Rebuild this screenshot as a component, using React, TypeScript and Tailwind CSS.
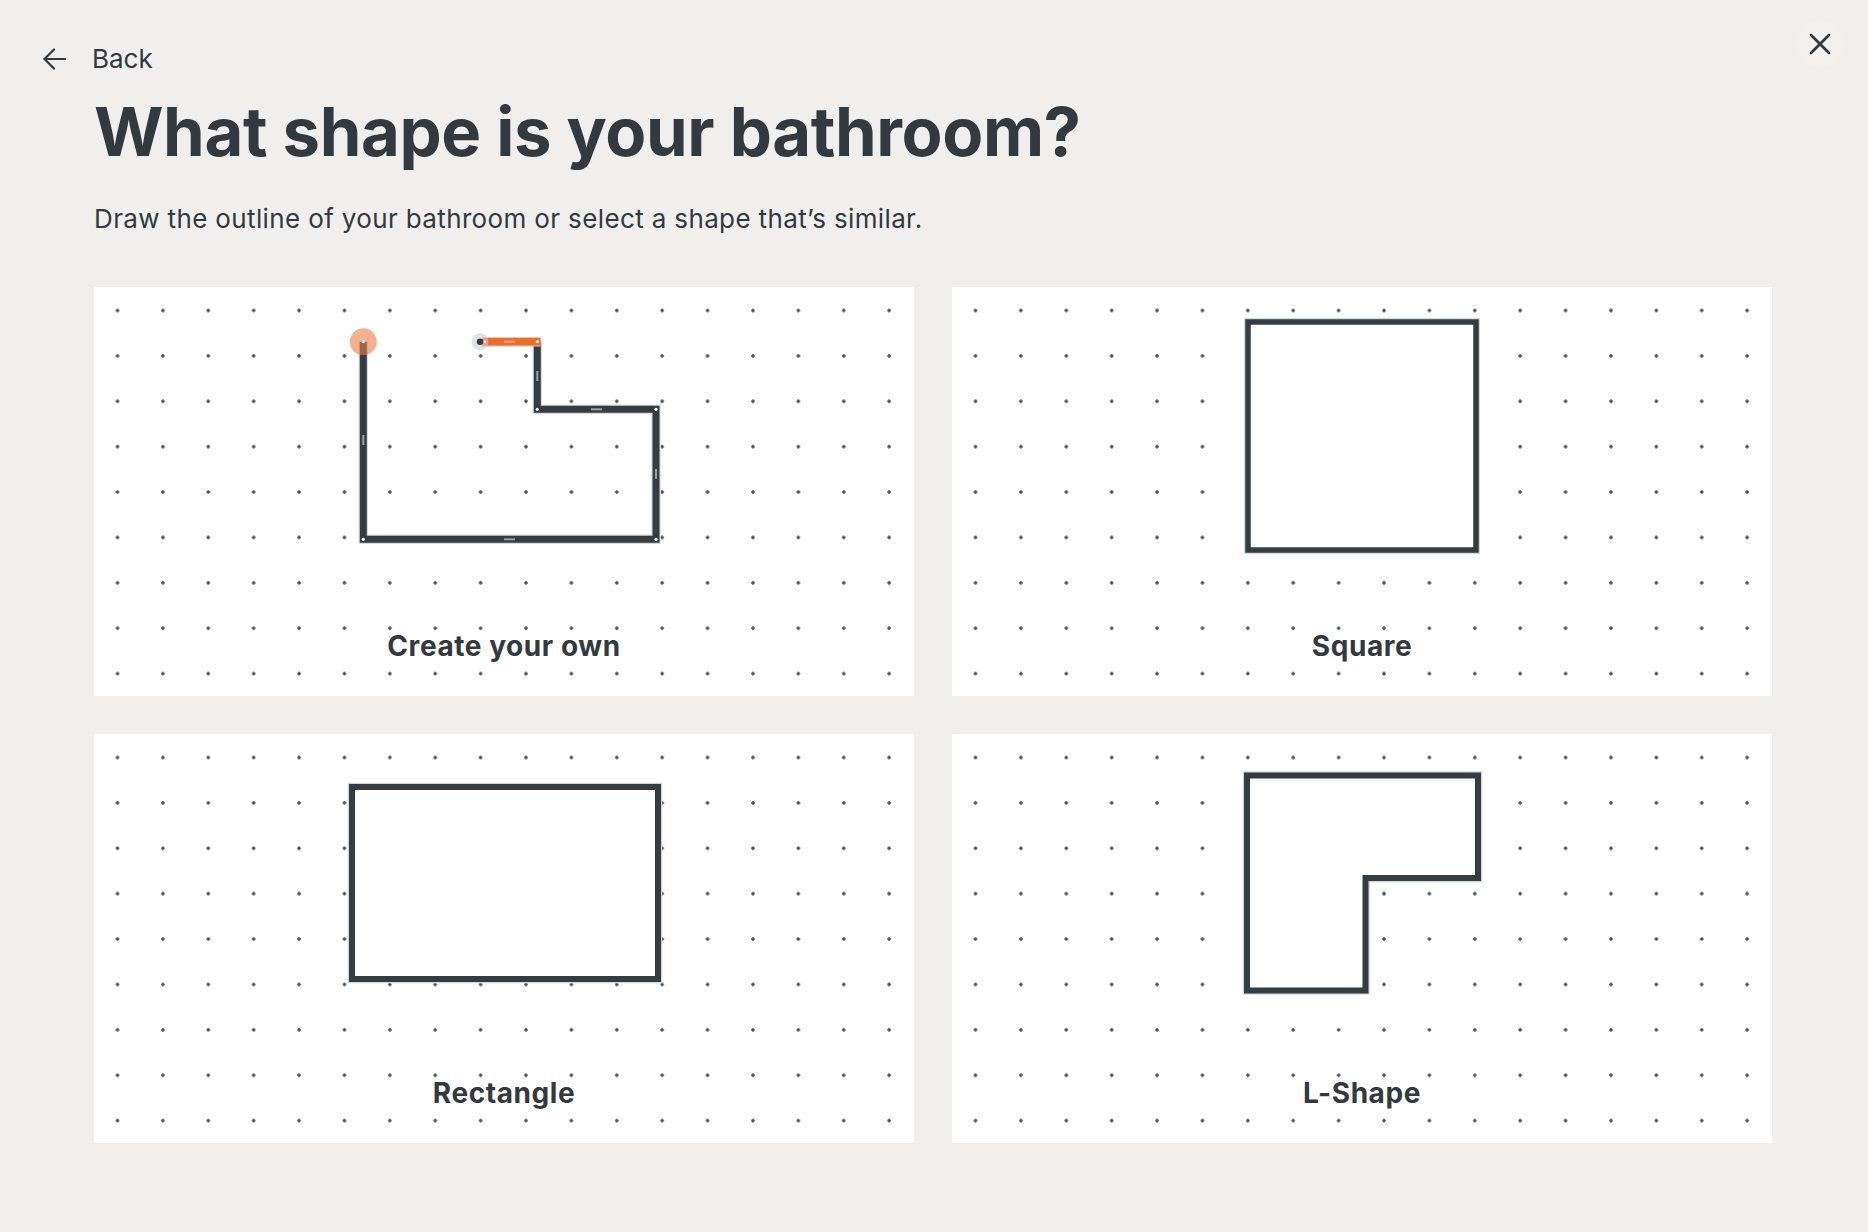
export default function App() {
  const dots =
    'bg-white bg-[radial-gradient(circle,#4a5056_1.4px,transparent_2px)] bg-[length:45.4px_45.4px] bg-[position:0.8px_0.8px]'

  return (
    <div className="min-h-screen w-full bg-[#f0efed] font-['Inter',sans-serif] text-[#32393f]">
      <header className="flex h-[98px] items-start justify-between">
        <button className="ml-[43px] mt-[46px] flex h-[26px] items-center gap-[26px] text-[26px] leading-none">
          <svg width="23" height="22" viewBox="0 0 23 22" fill="none" stroke="#32393f" strokeWidth="2.2" strokeLinecap="round" strokeLinejoin="round">
            <path d="M22 11H1.5" />
            <path d="M11 1.5 1.5 11l9.5 9.5" />
          </svg>
          <span>Back</span>
        </button>
        <button className="mr-[24px] mt-[20px] flex h-12 w-12 items-center justify-center rounded-full bg-[#f2f1f0]">
          <svg width="22" height="22" viewBox="0 0 22 22" fill="none" stroke="#32393f" strokeWidth="2.8" strokeLinecap="round">
            <path d="M2 2l18 18M20 2 2 20" />
          </svg>
        </button>
      </header>

      <main className="pl-[94px]">
        <h1 className="text-[67px] font-bold leading-none tracking-[-0.006em]">What shape is your bathroom?</h1>
        <p className="mt-[41px] text-[26px] leading-none tracking-[0.014em]">
          Draw the outline of your bathroom or select a shape that’s similar.
        </p>

        <div className="mt-[55px] grid grid-cols-[820px_820px] grid-rows-[409px_409px] gap-[38px] pb-[90px]">
          <div className={`flex flex-col items-center ${dots}`}>
            <svg width="820" height="300" viewBox="0 0 820 300" className="block">
              <path d="M443.3 54.7V122.3H562V252.3H269.3V54.7" fill="none" stroke="#d7dadc" strokeWidth="9.5" strokeLinejoin="miter" />
              <path d="M443.3 54.7V122.3H562V252.3H269.3V54.7" fill="none" stroke="#353c42" strokeWidth="7" strokeLinejoin="miter" />
              <line x1="388" y1="54.7" x2="446.5" y2="54.7" stroke="#f3c2a6" strokeWidth="9.5" />
              <line x1="388" y1="54.7" x2="446.5" y2="54.7" stroke="#ee6d2b" strokeWidth="7.5" />
              <circle cx="269.3" cy="54.7" r="13.5" fill="#ee7d45" fillOpacity="0.6" />
              <circle cx="386" cy="54.7" r="8.5" fill="#c9cccf" fillOpacity="0.55" />
              <circle cx="386" cy="54.7" r="3.2" fill="#353c42" />
              <g fill="#ffffff">
                <circle cx="269.3" cy="54.7" r="1.6" />
                <circle cx="269.3" cy="252.3" r="1.6" />
                <circle cx="562" cy="252.3" r="1.6" />
                <circle cx="562" cy="122.3" r="1.6" />
                <circle cx="443.3" cy="122.3" r="1.6" />
                <circle cx="443.3" cy="54.7" r="1.6" />
                <circle cx="391" cy="54.7" r="1.2" />
              </g>
              <g fill="#9aa0a5">
                <rect x="268.3" y="148" width="2" height="10" />
                <rect x="410" y="251.3" width="11" height="2" />
                <rect x="561" y="182" width="2" height="10" />
                <rect x="497" y="121.3" width="11" height="2" />
                <rect x="442.3" y="84" width="2" height="10" />
              </g>
              <rect x="410" y="53.7" width="11" height="2" fill="#f5a77f" />
            </svg>
            <span className="mt-auto pb-[33px] text-[28px] font-bold leading-[34px] tracking-[0.02em]">Create your own</span>
          </div>

          <div className={`flex flex-col items-center ${dots}`}>
            <svg width="820" height="300" viewBox="0 0 820 300" className="block">
              <rect x="296" y="35" width="228" height="228" fill="#ffffff" stroke="#d5d8da" strokeWidth="8" />
              <rect x="296" y="35" width="228" height="228" fill="#ffffff" stroke="#353c42" strokeWidth="5.5" />
            </svg>
            <span className="mt-auto pb-[33px] text-[28px] font-bold leading-[34px] tracking-[0.02em]">Square</span>
          </div>

          <div className={`flex flex-col items-center ${dots}`}>
            <svg width="820" height="300" viewBox="0 0 820 300" className="block">
              <rect x="258" y="53" width="306" height="192" fill="#ffffff" stroke="#d5d8da" strokeWidth="8.5" />
              <rect x="258" y="53" width="306" height="192" fill="#ffffff" stroke="#353c42" strokeWidth="6" />
            </svg>
            <span className="mt-auto pb-[33px] text-[28px] font-bold leading-[34px] tracking-[0.02em]">Rectangle</span>
          </div>

          <div className={`flex flex-col items-center ${dots}`}>
            <svg width="820" height="300" viewBox="0 0 820 300" className="block">
              <path d="M295 41.5H526V144H413.5V256.5H295Z" fill="#ffffff" stroke="#d5d8da" strokeWidth="8.5" />
              <path d="M295 41.5H526V144H413.5V256.5H295Z" fill="#ffffff" stroke="#353c42" strokeWidth="6" />
            </svg>
            <span className="mt-auto pb-[33px] text-[28px] font-bold leading-[34px] tracking-[0.02em]">L-Shape</span>
          </div>
        </div>
      </main>
    </div>
  )
}
